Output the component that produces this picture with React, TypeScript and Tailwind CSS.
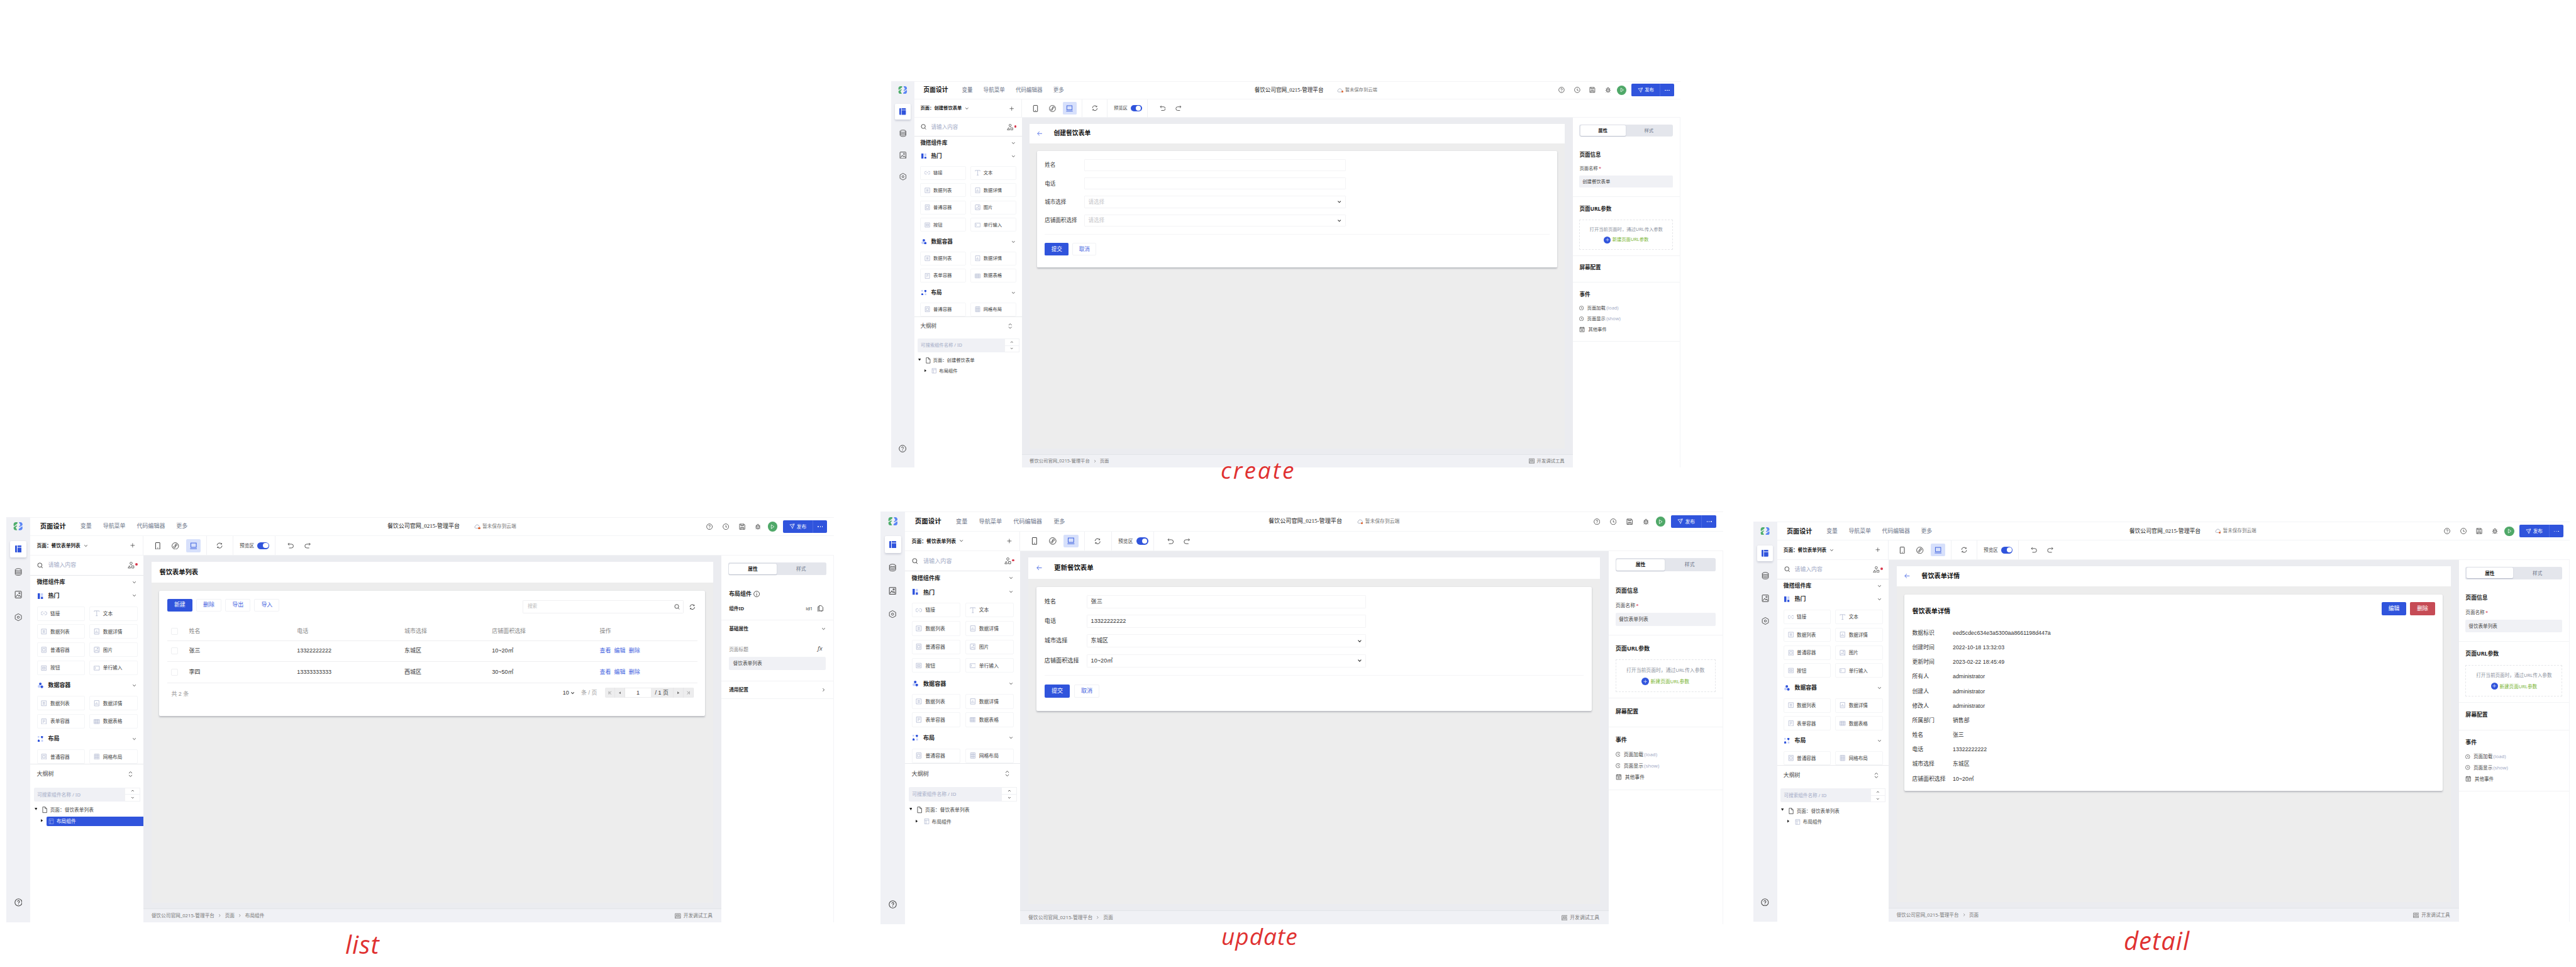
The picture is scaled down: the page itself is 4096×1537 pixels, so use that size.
import React from "react";

type Kind = "create" | "list" | "update" | "detail";

const SANS = "font-['Noto_Sans','Noto_Sans_CJK_SC',sans-serif]";
const ARIAL = "font-['Liberation_Sans','Noto_Sans_CJK_SC',sans-serif]";
const SERIF = "font-['Liberation_Serif','Noto_Sans_CJK_SC',serif]";

type IcProps = { size?: number; className?: string; sw?: number; children: React.ReactNode };

function Ic({ size = 16, className = "", sw = 1.3, children }: IcProps) {
  return (
    <svg
      width={size}
      height={size}
      viewBox="0 0 16 16"
      fill="none"
      stroke="currentColor"
      strokeWidth={sw}
      className={`shrink-0 ${className}`}
    >
      {children}
    </svg>
  );
}

const Chevron = ({ size = 11, className = "", dir = "down", sw = 2.2 }: { size?: number; className?: string; dir?: string; sw?: number }) => (
  <Ic size={size} className={className} sw={sw}>
    {dir === "down" && <path d="M3 5.5 8 10.5 13 5.5" />}
    {dir === "up" && <path d="M3 10.5 8 5.5 13 10.5" />}
    {dir === "right" && <path d="M5.5 3 10.5 8 5.5 13" />}
  </Ic>
);

const Help = ({ size = 16, className = "" }) => (
  <Ic size={size} className={className} sw={1.3}>
    <circle cx="8" cy="8" r="7" />
    <path d="M6 6.5a2 2 0 1 1 3 1.7c-.7.4-1 .8-1 1.5M8 11v1.3" />
  </Ic>
);

const Clock = ({ size = 16, className = "", sw = 1.3 }) => (
  <Ic size={size} className={className} sw={sw}>
    <circle cx="8" cy="8" r="7" />
    <path d="M8 4.5V9h3" />
  </Ic>
);

const Magnifier = ({ size = 15, className = "" }) => (
  <Ic size={size} className={className} sw={1.6}>
    <circle cx="7.2" cy="7" r="5.6" />
    <path d="M11 11l3.6 4" />
  </Ic>
);

const Refresh = ({ size = 16, className = "" }) => (
  <Ic size={size} className={className} sw={1.5}>
    <path d="M1.8 7.5A6.2 6.2 0 0 1 12.800 4M14.200 8.500A6.200 6.200 0 0 1 3.200 12" />
    <path d="M10.500 4.600h2.700V2M5.500 11.400H2.800V14" />
  </Ic>
);

const PictureIcon = ({ size = 16, className = "" }) => (
  <Ic size={size} className={className}>
    <rect x="1.5" y="1" width="13" height="14" rx="1" />
    <circle cx="10.3" cy="5" r="1.4" />
    <path d="M3 13l3.5-5 3 4M9 11l1.8-1.6L13 13" />
  </Ic>
);

function Logo() {
  return (
    <svg width="24" height="20" viewBox="0 0 24 20" className="shrink-0">
      <path d="M10.5 0H6.5C3 0 1 2 1 5.5v2.8C1 9.6 2 10 3 9.2L10.5 3z" fill="#4fae6c" />
      <path d="M1 12.6 7 8.6c1-.6 2.4-.2 3 .6l-4 3.6L10 20H6.500C3 20 1 18 1 14.500z" fill="#4fae6c" />
      <path d="M13.500 20h4c3.500 0 5.500-2 5.500-5.500v-2.800c0-1.300-1-1.700-2-.9L13.500 17z" fill="#5b86f5" />
      <path d="M23 7.400l-6 4c-1 .6-2.400.2-3-.6l4-3.600L14 0h3.500C21 0 23 2 23 5.500z" fill="#5b86f5" />
    </svg>
  );
}

function Rail() {
  return (
    <div className="flex w-[60px] shrink-0 flex-col items-center bg-[#f0f1f5] text-[#444]">
      <div className="mt-[14px]">
        <Logo />
      </div>
      <div className="mt-[26px] flex h-10 w-10 items-center justify-center rounded-[3px] bg-white shadow-[0_2px_5px_rgba(40,50,90,0.18)]">
        <svg width="17" height="17" viewBox="0 0 17 17" fill="#3054dc">
          <path d="M0 1.500Q0 0 1.500 0H4.500V17H1.500Q0 17 0 15.500zM6 0h9.500Q17 0 17 1.500V4H6zM6 5.500h11v10q0 1.500-1.500 1.500H6z" />
        </svg>
      </div>
      <div className="mt-[27px] flex flex-col items-center gap-[37.500px]">
        <Ic size={19} sw={1.200}>
          <ellipse cx="8" cy="3.500" rx="6.300" ry="2.500" />
          <path d="M1.700 3.500v9C1.700 14 4.500 15 8 15s6.300-1 6.300-2.500v-9M1.700 6.500C1.700 8 4.500 9 8 9s6.300-1 6.300-2.500M1.700 9.500C1.700 11 4.500 12 8 12s6.300-1 6.300-2.500" />
        </Ic>
        <PictureIcon size={19} />
        <Ic size={19} sw={1.200}>
          <path d="M8 .7l6.500 3.600v7.400L8 15.300l-6.500-3.600V4.300z" />
          <circle cx="8" cy="8" r="2.200" />
        </Ic>
      </div>
      <div className="mt-auto mb-[39px]">
        <Help size={20} />
      </div>
    </div>
  );
}

function TopBar() {
  return (
    <div className="flex h-[48px] shrink-0 items-center border-t border-b border-[#f3f4f6] bg-white pr-[16.500px] pl-6">
      <div className="flex w-[861px] shrink-0 items-center text-sm text-[#6b7488]">
        <span className="mr-2 text-base font-bold text-[#111]">页面设计</span>
        <span className="ml-7">变量</span>
        <span className="ml-7">导航菜单</span>
        <span className="ml-7">代码编辑器</span>
        <span className="ml-7">更多</span>
      </div>
      <span className={`text-[14px] text-[#222] ${SERIF}`}>餐饮公司官网_0215-管理平台</span>
      <div className="relative ml-9 text-[#9aa0b0]">
        <Ic size={15}>
          <path d="M4 12.500a3 3 0 0 1-.5-5.800 4.500 4.500 0 0 1 8.700 0 3 3 0 0 1 .3 5.800z" />
        </Ic>
        <span className="absolute right-0 bottom-[1px] h-[5px] w-[5px] rounded-full bg-[#e0602a]" />
      </div>
      <span className={`ml-[5px] text-xs text-[#777] ${SERIF}`}>暂未保存到云端</span>
      <div className="ml-auto flex items-center text-[#444]">
        <Help className="mr-6" />
        <Clock className="mr-6" />
        <Ic className="mr-6" sw={1.300}>
          <path d="M1.500 1.500h11l2 2v11h-13zM4.500 1.500v4h7v-4M4.500 14.500v-5h7v5M8 3v1.500M6.500 11.500h3" />
        </Ic>
        <Ic className="mr-4" sw={1.300}>
          <path d="M4.500 6h7v4.500a3.500 3.500 0 0 1-7 0zM5.500 6V4.500a2.500 2.500 0 0 1 5 0V6M8 8v5M1.500 9h3M11.500 9h3M2.500 4.500l2 2M13.500 4.500l-2 2M2.500 14l2-2M13.500 14l-2-2" />
        </Ic>
        <div className="flex h-6 w-6 items-center justify-center rounded-full bg-[#4fa868] text-white">
          <Ic size={13} sw={1.500}>
            <path d="M4.500 2 13 8l-8.500 6z" />
          </Ic>
        </div>
        <div className="ml-[13px] flex h-8 w-[110.500px] items-center rounded-[3px] bg-[#3054dc] text-white">
          <div className="flex h-full w-[76px] items-center justify-center gap-[5px] border-r border-[#4a6ae2] text-xs">
            <Ic size={14} sw={1.300}>
              <path d="M1.500 3.500 14.500 1.500 9 14.500 6.500 8.500zM6.500 8.500 14.500 1.500" />
            </Ic>
            发布
          </div>
          <div className="flex flex-1 items-center justify-center gap-[3px]">
            <i className="h-[2px] w-[2px] rounded-full bg-white" />
            <i className="h-[2px] w-[2px] rounded-full bg-white" />
            <i className="h-[2px] w-[2px] rounded-full bg-white" />
          </div>
        </div>
      </div>
    </div>
  );
}

function ToolBar({ page }: { page: string }) {
  return (
    <div className="flex h-[48.500px] shrink-0 border-b border-[#f3f4f6] bg-white text-[#444]">
      <div className="flex w-[280px] items-center border-r border-[#f0f1f4] pr-[19px] pl-4">
        <span className="text-xs font-bold text-[#222]">页面：{page}</span>
        <Chevron className="ml-2" />
        <Ic size={12} sw={1.600} className="ml-auto">
          <path d="M8 1v14M1 8h14" />
        </Ic>
      </div>
      <div className="flex w-[157.500px] items-center gap-[8.500px] border-r border-[#f0f1f4] pl-[17px]">
        <div className="flex w-9 justify-center">
          <Ic size={18} sw={1.400}>
            <rect x="3.300" y="0.800" width="9.400" height="14.400" rx="1" />
            <path d="M7 12.500h2" />
          </Ic>
        </div>
        <div className="flex w-9 justify-center">
          <Ic size={18} sw={1.300}>
            <circle cx="8" cy="8" r="7.200" />
            <path d="M8 5.800v4.400a1.900 1.900 0 1 1-1.900-1.900M8 10.200V5.800a1.900 1.900 0 1 1 1.900 1.900" />
          </Ic>
        </div>
        <div className="flex h-8 w-9 items-center justify-center rounded-[3px] bg-[#d7e0fb] text-[#3f63e0]">
          <Ic size={18} sw={1.400}>
            <rect x="2" y="1.500" width="12" height="9.500" />
            <path d="M0.500 14h15" />
          </Ic>
        </div>
      </div>
      <div className="flex w-[65.500px] items-center justify-center border-r border-[#f0f1f4]">
        <Refresh />
      </div>
      <div className="flex w-[104px] items-center border-r border-[#f0f1f4] pl-4">
        <span className="text-xs">预览区</span>
        <div className="ml-2 flex h-[17px] w-[29px] items-center justify-end rounded-full bg-[#3054dc] pr-[2px]">
          <i className="h-[13px] w-[13px] rounded-full bg-white" />
        </div>
      </div>
      <div className="flex items-center gap-[25px] pl-[31px]">
        <Ic sw={1.400}>
          <path d="M4.500 1.500 1.500 4.500 4.500 7.500M1.500 4.500H10a4.500 4.500 0 0 1 0 9.500H4" />
        </Ic>
        <Ic sw={1.400}>
          <path d="M11.500 1.500l3 3-3 3M14.500 4.500H6a4.500 4.500 0 0 0 0 9.500h6" />
        </Ic>
      </div>
    </div>
  );
}

const partIcons: Record<string, React.ReactNode> = {
  链接: <path d="M6 4H4a4 4 0 0 0 0 8h2M10 4h2a4 4 0 0 1 0 8h-2M5.500 8h5" />,
  文本: <path d="M1.500 4V1.500h13V4M8 1.500v13M5.500 14.500h5" />,
  数据列表: <path d="M1.500 1.500h13v13h-13zM5 5.500h6M5 8h6M5 10.500h6" />,
  数据详情: <path d="M2 1h12v14H2zM5 8v4M8 5v7M11 9v3" />,
  普通容器: <path d="M2 1h12v14H2zM5 4.500h6v7H5z" />,
  按钮: <path d="M1.500 2h13v12h-13zM4.500 5.500h7v5h-7zM6.500 8h3" />,
  单行输入: <path d="M1 3h14v10.500H1zM4 5.500v5" />,
  表单容器: <path d="M2 1h12v14H2zM5 4.500h6M5 7.500h6M5 10.500h3" />,
  数据表格: <path d="M1 2.500h14v11H1zM1 6h14M1 10h14M5.700 2.500v11M10.300 2.500v11" />,
  网格布局: <path d="M2 1h12v14H2zM2 5.700h12M2 10.300h12M6 1v14M10 1v14" />,
};

function PartGrid({ items }: { items: string[] }) {
  return (
    <div className="grid grid-cols-[119px_119px] gap-x-[11.500px] gap-y-[9px] pl-4">
      {items.map((t) => (
        <div key={t} className="flex h-9 items-center rounded-[3px] border border-[#f4f5f7] pl-[9px]">
          {t === "图片" ? (
            <PictureIcon size={15} className="text-[#a9b1cc]" />
          ) : (
            <Ic size={15} sw={1.200} className="text-[#a9b1cc]">
              {partIcons[t]}
            </Ic>
          )}
          <span className="ml-2 text-xs text-[#444]">{t}</span>
        </div>
      ))}
    </div>
  );
}

function Category({ title, children }: { title: string; children: React.ReactNode }) {
  return (
    <div className="flex h-[51.500px] items-center pr-[17px] pl-[18px]">
      <svg width="14" height="14" viewBox="0 0 14 14" className="shrink-0">
        {children}
      </svg>
      <span className="ml-3 text-sm font-bold text-[#222]">{title}</span>
      <Chevron className="ml-auto" />
    </div>
  );
}

function LeftPanel({ page, selected }: { page: string; selected: boolean }) {
  return (
    <div className="flex w-[280px] shrink-0 flex-col bg-white text-[#444]">
      <div className="flex h-[49px] shrink-0 items-center border-b border-[#e6e7eb] pr-[14px] pl-[17px]">
        <Magnifier />
        <span className="ml-3 text-sm text-[#a3abc6]">请输入内容</span>
        <Ic size={17} sw={1.200} className="ml-auto">
          <circle cx="8" cy="3.500" r="2.700" />
          <path d="M4 9 1 14.500h6zM9.500 9.500h5v5h-5zM8 6.200V8" />
        </Ic>
        <i className="mb-1 ml-[2px] h-[6px] w-[6px] rounded-full bg-[#d8384c]" />
      </div>
      <div className="h-[468px] shrink-0 border-b border-[#e9eaed]">
        <div className="flex h-[24.500px] items-center pt-2 pr-[17px] pl-4">
          <span className="text-sm font-bold text-[#222]">微搭组件库</span>
          <Chevron className="ml-auto" />
        </div>
        <Category title="热门">
          <path d="M0 0h5.500v14H0zM8 8.500h5V14H8z" fill="#3054dc" />
          <path d="M8 0h5v6.500H8z" fill="#c3d0fa" />
        </Category>
        <PartGrid items={["链接", "文本", "数据列表", "数据详情", "普通容器", "图片", "按钮", "单行输入"]} />
        <Category title="数据容器">
          <circle cx="3.500" cy="9.500" r="3.500" fill="#c3d0fa" />
          <circle cx="6.500" cy="3.200" r="3.200" fill="#3054dc" />
          <circle cx="10.300" cy="10.500" r="3.300" fill="#3054dc" />
        </Category>
        <PartGrid items={["数据列表", "数据详情", "表单容器", "数据表格"]} />
        <Category title="布局">
          <path d="M8 0h5v4l-2 2-3-2zM0 14v-4l2-2 3 2v4z" fill="#3054dc" />
          <path d="M0 0h4v4H0zM9 9h4v5H9z" fill="#c3d0fa" />
        </Category>
        <PartGrid items={["普通容器", "网格布局"]} />
      </div>
      <div className="flex h-[49px] items-center justify-between pr-6 pl-4">
        <span className="text-sm">大纲树</span>
        <Ic size={14} sw={1.600}>
          <path d="M3.500 5.500 8 1l4.500 4.500M3.500 10.500 8 15l4.500-4.500" />
        </Ic>
      </div>
      <div className="mt-2 flex h-[35px] shrink-0 pr-[7px] pl-[9px]">
        <div className="flex flex-1 items-center rounded-l-[3px] bg-[#f0f1f5] pl-2 text-xs text-[#a3abc6]">
          可搜索组件名称 / ID
        </div>
        <div className="flex w-[39px] flex-col border border-[#f0f1f4]">
          <div className="flex flex-1 items-center justify-center border-b border-[#f0f1f4]">
            <Chevron dir="up" size={9} sw={2.500} />
          </div>
          <div className="flex flex-1 items-center justify-center">
            <Chevron size={9} sw={2.500} />
          </div>
        </div>
      </div>
      <div className="mt-[7px] flex h-7 items-center pl-[10px]">
        <svg width="7" height="6" viewBox="0 0 7 6" className="mb-1">
          <path d="M0 0h7L3.500 6z" fill="#222" />
        </svg>
        <Ic size={16} className="ml-[11px]">
          <path d="M3 1h6l4 4v10H3zM9 1v4h4" />
        </Ic>
        <span className="ml-[5px] text-xs">页面：{page}</span>
      </div>
      <div className="flex h-7 items-center pl-[26px]">
        <svg width="5" height="7" viewBox="0 0 5 7" className="mb-[2px] shrink-0">
          <path d="M0 0v7l5-3.500z" fill="#222" />
        </svg>
        <div
          className={
            selected
              ? "ml-[9px] flex h-6 flex-1 items-center rounded-l-[3px] bg-[#3054dc] pl-[5px] text-white"
              : "ml-[9px] flex h-6 flex-1 items-center pl-[5px]"
          }
        >
          <Ic size={14} sw={1.200} className={selected ? "text-[#9db0f0]" : "text-[#a9b1cc]"}>
            <path d="M2 1h12v14H2zM2 5h12M6 5v10" />
          </Ic>
          <span className="ml-[6px] text-xs">布局组件</span>
        </div>
      </div>
    </div>
  );
}

function Tabs() {
  return (
    <div className="mx-[17px] mt-[17px] flex h-[31.500px] shrink-0 rounded-[4px] bg-[#e4e6ec] p-[2px] text-xs">
      <div className="flex w-[118px] items-center justify-center rounded-[3px] bg-white font-bold text-[#222] shadow-[0_1px_2px_rgba(40,50,90,0.25)]">
        属性
      </div>
      <div className="flex flex-1 items-center justify-center text-[#6b7488]">样式</div>
    </div>
  );
}

function PagePanel({ name }: { name: string }) {
  return (
    <div className="flex flex-col text-xs text-[#444]">
      <div className="flex h-[157px] flex-col border-b border-[#f2f3f5] px-[17px] pt-9">
        <div className="flex h-[22px] items-center text-sm font-bold text-[#222]">页面信息</div>
        <div className="mt-[15px] flex h-5 items-center">
          页面名称<span className="ml-[2px] text-[#d8384c]">*</span>
        </div>
        <div className="mt-2 flex h-8 items-center rounded-[3px] bg-[#f0f1f5] pl-2">{name}</div>
      </div>
      <div className="flex h-[153px] flex-col border-b border-[#f2f3f5] px-[17px] pt-5">
        <div className="flex h-[22px] items-center text-sm font-bold text-[#222]">页面URL参数</div>
        <div className="mt-[16px] flex h-[79px] flex-col items-center border border-dashed border-[#e6e7ea] pt-[15px]">
          <div className="flex h-5 items-center whitespace-nowrap text-[#8d93a1]">打开当前页面时，通过URL传入参数</div>
          <div className="mt-[7px] flex h-5 items-center text-[#7ab534]">
            <span className="mr-1 flex h-[18px] w-[18px] items-center justify-center rounded-full bg-[#3054dc] text-white">
              <Ic size={10} sw={1.600}>
                <path d="M8 1v14M1 8h14" />
              </Ic>
            </span>
            新建页面URL参数
          </div>
        </div>
      </div>
      <div className="flex h-[69.500px] items-center border-b border-[#f2f3f5] px-[17px] pb-[6px] text-sm font-bold text-[#222]">
        屏幕配置
      </div>
      <div className="flex h-[153px] flex-col border-b border-[#f2f3f5] px-[17px] pt-5">
        <div className="mb-[10px] flex h-[22px] items-center text-sm font-bold text-[#222]">事件</div>
        {[
          ["页面加载", "(load)"],
          ["页面显示", "(show)"],
        ].map(([t, e]) => (
          <div key={t} className="flex h-7 items-center">
            <Clock size={12} className="mr-2" sw={1.400} />
            {t}
            <span className="ml-[2px] text-[#a3abc6]">{e}</span>
          </div>
        ))}
        <div className="flex h-7 items-center">
          <Ic size={15} sw={1.300} className="mr-2">
            <path d="M2 2.500h12v12H2zM2 5.500h12M5 1v3M11 1v3M5 8.500h6M5 11.500h6" />
          </Ic>
          其他事件
        </div>
      </div>
    </div>
  );
}

function LayoutPanel() {
  return (
    <div className="flex flex-col text-xs text-[#444]">
      <div className="flex h-[111px] flex-col border-b border-[#f2f3f5] px-[19px] pt-9">
        <div className="flex h-[22px] items-center text-sm font-bold text-[#222]">
          布局组件
          <Ic size={16} sw={1.200} className="ml-1">
            <circle cx="8" cy="8" r="7" />
            <path d="M8 7v5.500M8 4v1.500" />
          </Ic>
        </div>
        <div className="mt-[14px] flex h-5 items-center">
          <span className="font-bold text-[#333]">组件ID</span>
          <span className="ml-auto">id1</span>
          <Ic size={17} className="mr-[5px] ml-[10px]">
            <path d="M5 1h5l4 3.500V13H5zM5 3.500H2.500V15h8.500v-2" />
          </Ic>
        </div>
      </div>
      <div className="flex h-[152px] flex-col border-b border-[#f2f3f5] px-[19px]">
        <div className="flex h-[43px] items-center">
          <span className="font-bold text-[#333]">基础属性</span>
          <Chevron className="ml-auto" />
        </div>
        <div className="mt-[19px] flex h-5 items-center text-[#888]">
          页面标题<span className="ml-auto pr-2 text-[15px] italic text-[#555]">fx</span>
        </div>
        <div className="mt-[9px] flex h-8 items-center rounded-[3px] bg-[#f0f1f5] pl-[10px]">餐饮表单列表</div>
      </div>
      <div className="flex h-[43px] items-center border-b border-[#f2f3f5] px-[19px]">
        <span className="font-bold text-[#333]">通用配置</span>
        <Chevron dir="right" className="ml-auto" />
      </div>
    </div>
  );
}

const PRIMARY = "flex h-8 w-[62px] items-center justify-center rounded-[3px] bg-[#3054dc] text-sm text-white";
const DANGER = "flex h-8 w-[62px] items-center justify-center rounded-[3px] bg-[#c64b55] text-sm text-white";
const GHOST = "flex h-8 w-[62px] items-center justify-center rounded-[3px] border border-[#f1f2f5] text-sm text-[#3f5fe0]";

function FormBody({ values }: { values: string[] }) {
  const labels = ["姓名", "电话", "城市选择", "店铺面积选择"];
  return (
    <div className="flex h-[302px] flex-col px-[19.500px] pt-5">
      <div className="flex flex-col gap-4 border-b border-[#f5f5f6] pb-[19.500px]">
        {labels.map((l, i) => (
          <div key={l} className="flex h-8 items-center text-sm text-[#333]">
            <span className="w-[102.500px]">{l}</span>
            <div className="flex h-8 w-[680px] items-center justify-between rounded-[2px] border border-[#f3f3f5] pr-2 pl-[9px]">
              {values[i] ? <span>{values[i]}</span> : <span className="text-[#c4c4c8]">{i > 1 ? "请选择" : ""}</span>}
              {i > 1 && <Chevron size={12} sw={2.300} />}
            </div>
          </div>
        ))}
      </div>
      <div className="mt-[21.500px] flex gap-[10px]">
        <div className={PRIMARY}>提交</div>
        <div className={GHOST}>取消</div>
      </div>
    </div>
  );
}

function Box() {
  return <i className="ml-[10px] h-[17px] w-[17px] rounded-[3px] border border-[#eeeff1]" />;
}

function ListBody() {
  const cols = "grid grid-cols-[54px_267.500px_266.500px_217px_267px_1fr] items-center border-b border-[#eeeef0]";
  const rows = [
    ["张三", "13322222222", "东城区", "10~20㎡"],
    ["李四", "13333333333", "西城区", "30~50㎡"],
  ];
  const seg = "flex h-full items-center justify-center border-r border-[#e5e5e7] bg-[#ededee]";
  return (
    <div className="flex h-[310.500px] flex-col px-[19.500px] pt-5 text-sm text-[#333]">
      <div className="flex h-9 items-start gap-[10px]">
        <div className={PRIMARY}>新建</div>
        <div className={GHOST}>删除</div>
        <div className={GHOST}>导出</div>
        <div className={GHOST}>导入</div>
        <div className="mt-1 mr-[4px] ml-auto flex items-center">
          <div className="flex h-8 w-[400px] items-center justify-between rounded-[2px] border border-[#f0f0f2] pr-[9px] pl-[11px] text-xs text-[#bbb]">
            搜索
            <Magnifier className="text-[#444]" size={14} />
          </div>
          <Refresh size={15} className="ml-[14px]" />
        </div>
      </div>
      <div className={`${cols} mt-6 h-[44.500px] text-[#888]`}>
        <Box />
        <span>姓名</span>
        <span>电话</span>
        <span>城市选择</span>
        <span>店铺面积选择</span>
        <span>操作</span>
      </div>
      {rows.map((r) => (
        <div key={r[0]} className={`${cols} h-[52.300px]`}>
          <Box />
          {r.map((c) => (
            <span key={c}>{c}</span>
          ))}
          <span className="flex gap-2 text-[#3f5fe0]">
            <span>查看</span>
            <span>编辑</span>
            <span>删除</span>
          </span>
        </div>
      ))}
      <div className="flex h-[56px] items-center justify-between pr-[9px] pl-[10px] text-[#999]">
        <span>共 2 条</span>
        <div className="mb-[8px] flex items-center">
          <span className="text-[#333]">10</span>
          <Chevron size={11} sw={2.300} className="mr-[15px] ml-1 text-[#333]" />
          条 / 页
          <div className="ml-5 flex h-[26px] w-[219px] items-center overflow-hidden rounded-[3px] text-[#333]">
            <span className={`${seg} w-[25px]`}>
              <Ic size={10} sw={2} className="text-[#888]">
                <path d="M3 2v12M12 2 6 8l6 6" />
              </Ic>
            </span>
            <span className={`${seg} w-[25px]`}>
              <svg width="5" height="7" viewBox="0 0 5 7">
                <path d="M5 0v7L0 3.500z" fill="#777" />
              </svg>
            </span>
            <span className="flex h-full w-[63px] items-center justify-center border-y border-[#ededee]">1</span>
            <span className={`${seg} w-[56px]`}>/ 1 页</span>
            <span className={`${seg} w-[25px]`}>
              <svg width="5" height="7" viewBox="0 0 5 7">
                <path d="M0 0v7l5-3.500z" fill="#777" />
              </svg>
            </span>
            <span className={`${seg} w-[25px]`}>
              <Ic size={10} sw={2} className="text-[#888]">
                <path d="M13 2v12M4 2l6 6-6 6" />
              </Ic>
            </span>
          </div>
        </div>
      </div>
    </div>
  );
}

function DetailBody() {
  const rows = [
    ["数据标识", "eed5cdec634e3a5300aa8661198d447a"],
    ["创建时间", "2022-10-18 13:32:03"],
    ["更新时间", "2023-02-22 18:45:49"],
    ["所有人", "administrator"],
    ["创建人", "administrator"],
    ["修改人", "administrator"],
    ["所属部门", "销售部"],
    ["姓名", "张三"],
    ["电话", "13322222222"],
    ["城市选择", "东城区"],
    ["店铺面积选择", "10~20㎡"],
  ];
  return (
    <div className="flex h-[493.500px] flex-col px-[19.500px] pt-5 text-sm text-[#333]">
      <div className="flex h-[59px] items-start">
        <span className="mt-[10px] text-base font-bold text-[#111]">餐饮表单详情</span>
        <div className="ml-auto flex gap-[10px]">
          <div className={PRIMARY}>编辑</div>
          <div className={DANGER}>删除</div>
        </div>
      </div>
      {rows.map(([k, v]) => (
        <div key={k} className="flex h-[36.600px] shrink-0 items-center">
          <span className="w-[102px]">{k}</span>
          <span>{v}</span>
        </div>
      ))}
    </div>
  );
}

function Screen({ kind, page, title }: { kind: Kind; page: string; title: string }) {
  return (
    <div className={`flex h-[1005px] w-[2052px] bg-white leading-normal ${SANS}`}>
      <Rail />
      <div className="flex flex-1 flex-col">
        <TopBar />
        <ToolBar page={page} />
        <div className="flex min-h-0 flex-1">
          <LeftPanel page={page} selected={kind === "list"} />
          <div className="flex w-[1433px] shrink-0 flex-col bg-[#ebecf0]">
            <div className={`mt-[15px] mr-[20.500px] ml-5 flex h-[844.500px] flex-col bg-[#ededed] ${ARIAL}`}>
              <div className="flex h-[51.500px] shrink-0 items-center bg-white px-5">
                {kind !== "list" && (
                  <Ic size={14} sw={1.600} className="mr-[29px] text-[#4a69e6]">
                    <path d="M15 8H1.500M7 2 1.500 8 7 14" />
                  </Ic>
                )}
                <span className="text-base font-bold text-[#111]">{title}</span>
              </div>
              <div className="mx-[20px] mt-5 rounded-[3px] bg-white shadow-[0_2px_4px_rgba(30,40,60,0.25)]">
                {kind === "create" && <FormBody values={[]} />}
                {kind === "update" && <FormBody values={["张三", "13322222222", "东城区", "10~20㎡"]} />}
                {kind === "list" && <ListBody />}
                {kind === "detail" && <DetailBody />}
              </div>
            </div>
            <div className="mt-auto flex h-[35px] items-center gap-2 border-t border-[#e2e4e9] bg-[#f0f1f5] pr-[22px] pl-5 text-xs text-[#777]">
              餐饮公司官网_0215-管理平台
              <Chevron dir="right" size={10} sw={1.800} />
              页面
              {kind === "list" && (
                <>
                  <Chevron dir="right" size={10} sw={1.800} />
                  布局组件
                </>
              )}
              <Ic size={15} sw={1.400} className="ml-auto">
                <path d="M1 2h14v12.500H1zM1 11h14M4 5h8v3H4z" />
              </Ic>
              <span className="-ml-[2px]">开发调试工具</span>
            </div>
          </div>
          <div className="flex flex-1 flex-col border-r border-[#f3f4f6] bg-white">
            <Tabs />
            {kind === "list" ? <LayoutPanel /> : <PagePanel name={page} />}
          </div>
        </div>
      </div>
    </div>
  );
}

const LABEL = "absolute whitespace-nowrap font-['Open_Sans',sans-serif] leading-none italic text-[#e03131]";

export default function App() {
  return (
    <div className="relative h-[1537px] w-[4096px] overflow-hidden bg-white">
      <div className="absolute top-[128.500px] left-[1417px]">
        <div className="[zoom:0.6114]">
          <Screen kind="create" page="创建餐饮表单" title="创建餐饮表单" />
        </div>
      </div>
      <div className="absolute top-[821.500px] left-[9.800px]">
        <div className="[zoom:0.6414]">
          <Screen kind="list" page="餐饮表单列表" title="餐饮表单列表" />
        </div>
      </div>
      <div className="absolute top-[813.300px] left-[1400px]">
        <div className="[zoom:0.6529]">
          <Screen kind="update" page="餐饮表单列表" title="更新餐饮表单" />
        </div>
      </div>
      <div className="absolute top-[829px] left-[2787.800px]">
        <div className="[zoom:0.6327]">
          <Screen kind="detail" page="餐饮表单列表" title="餐饮表单详情" />
        </div>
      </div>
      <span className={`${LABEL} top-[728px] left-[1941px] text-[37px] tracking-[3px]`}>create</span>
      <span className={`${LABEL} top-[1481px] left-[549px] text-[40px] tracking-[1px]`}>list</span>
      <span className={`${LABEL} top-[1469px] left-[1942px] text-[37px] tracking-[1px]`}>update</span>
      <span className={`${LABEL} top-[1475px] left-[3377px] text-[40px] tracking-[1px]`}>detail</span>
    </div>
  );
}
